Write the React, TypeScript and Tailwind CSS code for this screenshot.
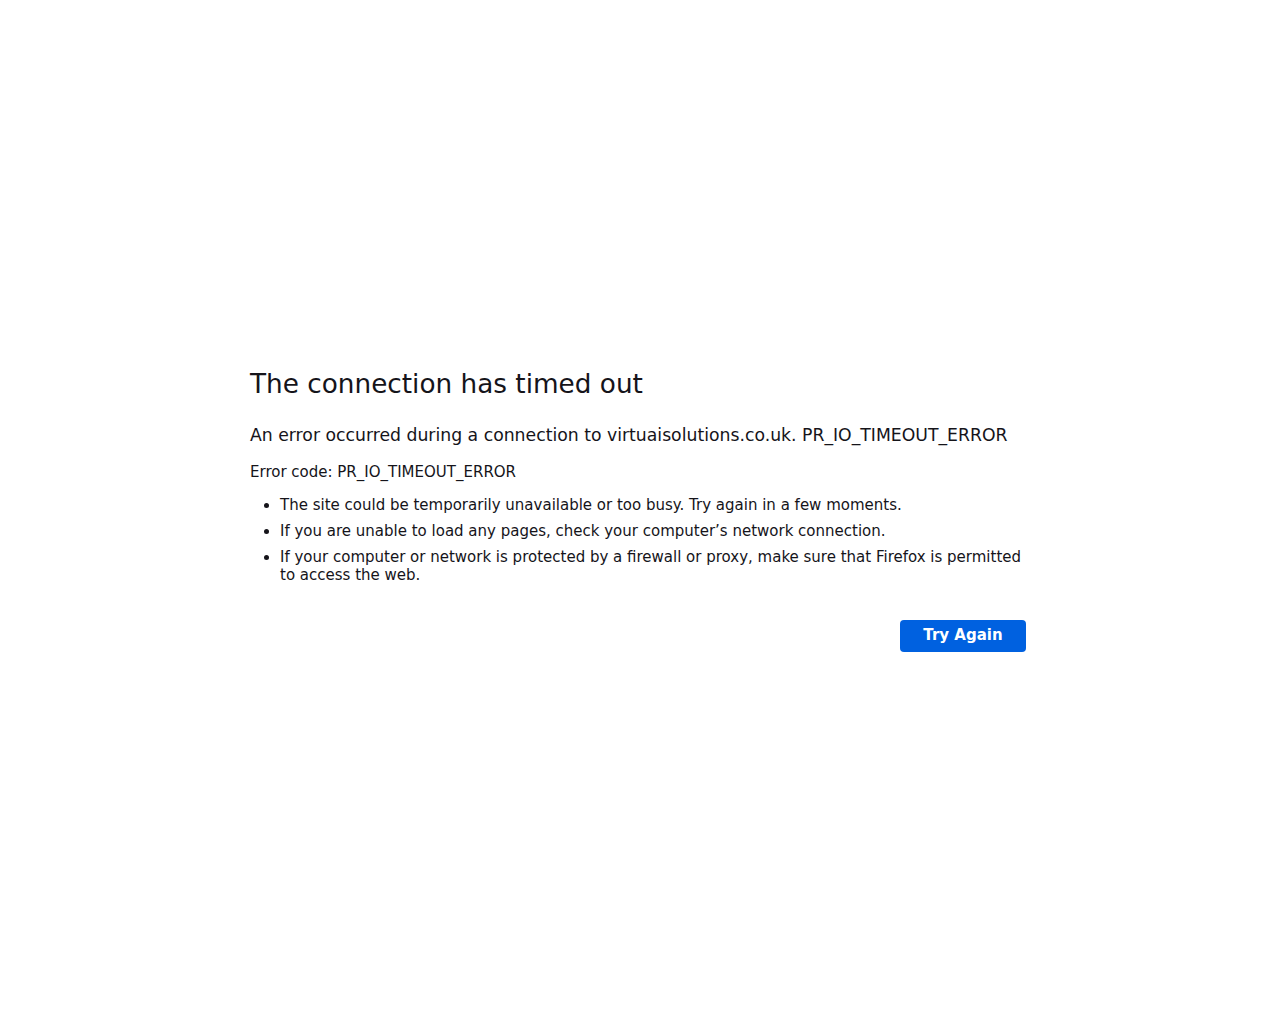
export default function App() {
  return (
    <main
      className="min-h-screen w-full flex items-center justify-center bg-white pb-[6px] text-[#15141a]"
      style={{ fontFamily: '"DejaVu Sans", sans-serif' }}
    >
      <div className="w-[780px] pr-[4px] flex flex-col">
        <h1 className="text-[26.3px] leading-[34px] font-normal">The connection has timed out</h1>

        <p className="mt-[22px] text-[17.25px] leading-[24px]">
          An error occurred during a connection to virtuaisolutions.co.uk. PR_IO_TIMEOUT_ERROR
        </p>

        <p className="mt-[14px] text-[15px] leading-[22px]">Error code: PR_IO_TIMEOUT_ERROR</p>

        <ul className="mt-[13px] pl-[30px] text-[15px] leading-[18px] list-disc flex flex-col gap-[8px]">
          <li>The site could be temporarily unavailable or too busy. Try again in a few moments.</li>
          <li>If you are unable to load any pages, check your computer’s network connection.</li>
          <li>
            If your computer or network is protected by a firewall or proxy, make sure that Firefox is permitted to
            access the web.
          </li>
        </ul>

        <div className="mt-[36px] flex justify-end">
          <button className="h-[32px] w-[126px] rounded-[4px] bg-[#0061e0] text-white text-[15px] font-bold">
            Try Again
          </button>
        </div>
      </div>
    </main>
  );
}
